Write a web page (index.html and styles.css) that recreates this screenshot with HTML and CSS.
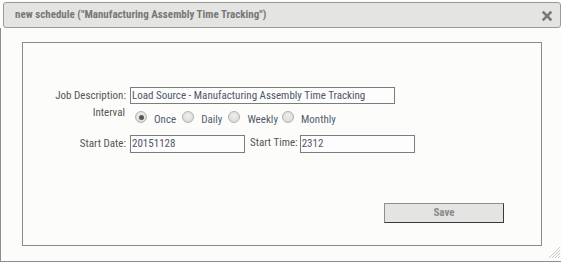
FILE: index.html
```html
<!DOCTYPE html>
<html>
<head>
<meta charset="utf-8">
<link rel="stylesheet" href="styles.css">
</head>
<body>
<div class="dialog">
  <div class="titlebar">
    <span class="title">new schedule ("Manufacturing Assembly Time Tracking")</span>
    <svg class="close" width="10" height="10" viewBox="0 0 10 10" aria-label="close">
      <path d="M1.5 1.5 L8.5 8.5 M8.5 1.5 L1.5 8.5" stroke="#7a7a7a" stroke-width="2.6" stroke-linecap="square"/>
    </svg>
  </div>
  <div class="content">
    <div class="panel">
      <div class="row row-job">
        <label class="lbl">Job Description:</label>
        <div class="input wide">Load Source - Manufacturing Assembly Time Tracking</div>
      </div>
      <div class="row row-interval">
        <label class="lbl lbl-interval">Interval</label>
        <div class="radios">
          <span class="opt"><span class="radio checked"></span><span class="opt-text">Once</span></span>
          <span class="opt"><span class="radio"></span><span class="opt-text">Daily</span></span>
          <span class="opt"><span class="radio"></span><span class="opt-text">Weekly</span></span>
          <span class="opt"><span class="radio"></span><span class="opt-text">Monthly</span></span>
        </div>
      </div>
      <div class="row row-start">
        <label class="lbl">Start Date:</label>
        <div class="input short">20151128</div>
        <label class="lbl-time">Start Time:</label>
        <div class="input short">2312</div>
      </div>
      <div class="row row-save">
        <div class="save">Save</div>
      </div>
    </div>
    <svg class="grip" width="13" height="13" viewBox="0 0 13 13">
      <path d="M12 1 L1 12 M12 4 L4 12 M12 7 L7 12 M12 10 L10 12" stroke="#c8c9c7" stroke-width="1"/>
    </svg>
  </div>
</div>
</body>
</html>
```
FILE: styles.css
```css
html, body {
  margin: 0;
  padding: 0;
  background: #fcfdfb;
}
body {
  font-family: "Roboto Condensed", Roboto, "Liberation Sans", sans-serif;
  font-size: 11px;
  color: #555;
}
.dialog {
  width: 561px;
  height: 263px;
}
.titlebar {
  box-sizing: border-box;
  margin: 2px 0 0 3px;
  width: 558px;
  height: 26px;
  border: 1px solid #9a9b99;
  border-radius: 3px;
  background: #e4e5e3;
  display: flex;
  align-items: center;
  justify-content: space-between;
  padding: 0 8px 0 11px;
}
.title {
  font-weight: bold;
  color: #777;
  font-size: 11px;
  line-height: 14px;
}
.close {
  display: block;
  margin-top: 1px;
}
.content {
  position: relative;
  box-sizing: border-box;
  height: 234px;
  border-left: 1px solid #8d8e8c;
  border-bottom: 1px solid #8d8e8c;
  padding: 14px 0 0 21px;
}
.panel {
  box-sizing: border-box;
  width: 520px;
  height: 204px;
  border: 1px solid #8a8b89;
  background: #fcfdfb;
}
.row {
  display: flex;
  align-items: flex-start;
}
.lbl {
  width: 103px;
  text-align: right;
  line-height: 17px;
  margin-right: 4px;
  color: #555;
}
.input {
  box-sizing: border-box;
  height: 17px;
  border: 1px solid #7c7d7b;
  background: #fdfdfd;
  color: #4e5668;
  line-height: 15px;
  padding: 0 1px;
  white-space: nowrap;
  overflow: hidden;
}
.wide { width: 265px; }
.short { width: 115px; height: 18px; line-height: 16px; }
.row-job { margin-top: 44px; }
.row-interval { margin-top: 2px; height: 18px; }
.lbl-interval {
  line-height: 14px;
  width: 102px;
  margin-right: 0;
}
.radios {
  display: flex;
  margin-left: 10px;
}
.opt {
  display: flex;
  align-items: flex-start;
  margin-right: 6px;
}
.opt:nth-child(3) { margin-right: 4px; }
.radio {
  box-sizing: border-box;
  width: 12px;
  height: 12px;
  margin-top: 5px;
  border-radius: 50%;
  border: 1px solid #b3b4b2;
  background: radial-gradient(circle at 50% 40%, #f0f0ef 0%, #dcdddb 70%, #cfd0ce 100%);
  position: relative;
}
.radio.checked::after {
  content: "";
  position: absolute;
  left: 2.5px;
  top: 2.5px;
  width: 5px;
  height: 5px;
  border-radius: 50%;
  background: #555;
}
.opt-text {
  margin-left: 7px;
  margin-top: 7px;
  line-height: 14px;
  color: #535b6d;
}
.row-start { margin-top: 11px; }
.lbl-time {
  line-height: 16px;
  margin: 0 2px 0 5px;
  color: #555;
}
.row-save {
  margin-top: 50px;
  padding-left: 361px;
}
.save {
  box-sizing: border-box;
  width: 120px;
  height: 20px;
  border: 1px solid #8f908e;
  border-right-color: #3a3a3a;
  border-bottom-color: #3a3a3a;
  background: #e4e5e3;
  text-align: center;
  font-weight: bold;
  color: #8a8b89;
  line-height: 18px;
}
.grip {
  position: absolute;
  right: 0;
  bottom: 2px;
}
```
